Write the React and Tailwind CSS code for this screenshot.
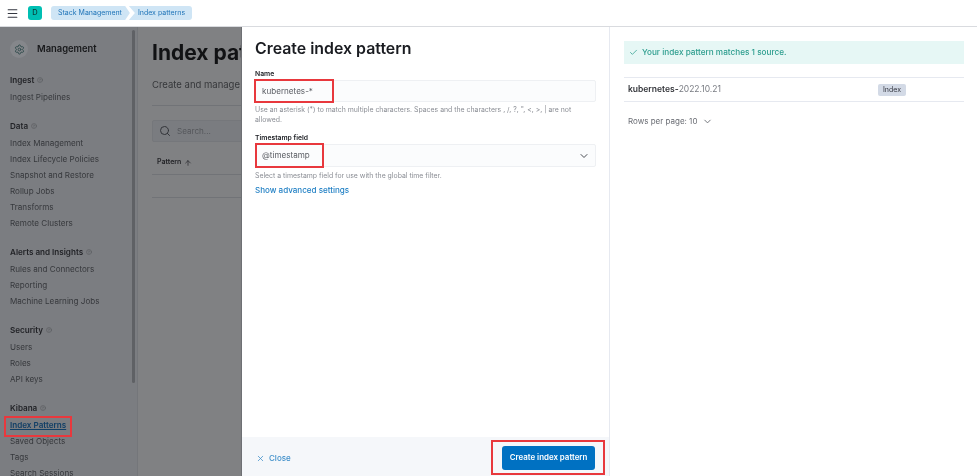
import React from 'react';
import { Menu, Check, ChevronDown, X, Search, ArrowUp, Settings, HelpCircle } from 'lucide-react';

const navGroups = [
  { title: 'Ingest', items: ['Ingest Pipelines'] },
  { title: 'Data', items: ['Index Management', 'Index Lifecycle Policies', 'Snapshot and Restore', 'Rollup Jobs', 'Transforms', 'Remote Clusters'] },
  { title: 'Alerts and Insights', items: ['Rules and Connectors', 'Reporting', 'Machine Learning Jobs'] },
  { title: 'Security', items: ['Users', 'Roles', 'API keys'] },
  { title: 'Kibana', items: ['Index Patterns', 'Saved Objects', 'Tags', 'Search Sessions'] },
];

function Sidebar() {
  return (
    <aside className="relative w-[138px] shrink-0 overflow-hidden bg-[#7b7d81] border-r border-[#74767a] pl-[10px] pt-[8px]">
      <div className="flex items-center gap-[9px] h-[28px]">
        <div className="w-[18px] h-[18px] rounded-full bg-[#85878b] flex items-center justify-center">
          <Settings size={11} className="text-[#2f4a4c]" />
        </div>
        <span className="text-[9.4px] font-semibold text-[#17181a]">Management</span>
      </div>
      <div className="mt-[9px] flex flex-col gap-[13px]">
        {navGroups.map((group) => (
          <div key={group.title}>
            <div className="h-[16px] flex items-center gap-[3px] text-[8.1px] font-semibold text-[#222327]">
              {group.title}
              <HelpCircle size={6} className="text-[#55575a]" />
            </div>
            <ul className="mt-[1px]">
              {group.items.map((item) => (
                <li
                  key={item}
                  className={item === 'Index Patterns'
                    ? 'h-[16px] leading-[16px] text-[8.1px] font-semibold underline text-[#123f66] whitespace-nowrap'
                    : 'h-[16px] leading-[16px] text-[8.1px] text-[#36383c] whitespace-nowrap'}
                >
                  {item}
                </li>
              ))}
            </ul>
          </div>
        ))}
      </div>
      {/* scrollbar */}
      <div className="absolute right-[2px] top-[3px] w-[3px] h-[353px] bg-[#5f6165] rounded-full" />
    </aside>
  );
}

function PageBehind() {
  return (
    <main className="flex-1 bg-[#808183] pl-[14px] pt-[12px] overflow-hidden">
      <h1 className="text-[21px] leading-[28px] font-bold text-[#111214] whitespace-nowrap">Index patterns</h1>
      <p className="mt-[11px] text-[9.5px] leading-[14px] text-[#35373a] whitespace-nowrap">Create and manage your index patterns</p>
      <div className="mt-[13px] h-px bg-[#717377]" />
      <div className="mt-[14px] h-[22px] rounded-[2px] bg-[#7a7c80] border border-[#75777b] flex items-center pl-[6px] gap-[6px]">
        <Search size={12} className="text-[#33353a]" />
        <span className="text-[8.1px] text-[#55575b]">Search...</span>
      </div>
      <div className="mt-[15px] pl-[5px] h-[18px] flex items-center gap-[3px] text-[7px] font-semibold text-[#222327] border-b border-[#717377] pb-[6px]">
        Pattern <ArrowUp size={8} />
      </div>
      <div className="h-[23px] border-b border-[#717377]" />
    </main>
  );
}

function FormPane() {
  return (
    <section className="w-[368px] shrink-0 flex flex-col border-r border-[#e6e9f0]">
      <div className="flex-1 px-[13px] pt-[11px]">
        <h2 className="text-[15.9px] leading-[22px] font-semibold text-[#1a1c21]">Create index pattern</h2>
        <label className="block mt-[9px] text-[6.8px] leading-[10px] font-semibold text-[#1a1c21]">Name</label>
        <div className="mt-[1px] h-[22px] bg-[#fbfcfd] border border-[#eef0f3] rounded-[2px] flex items-center pl-[6px] text-[8.1px] text-[#5a5d63]">kubernetes-*</div>
        <p className="mt-[3px] text-[6.9px] leading-[10px] text-[#8b8e95]">Use an asterisk (*) to match multiple characters. Spaces and the characters , /, ?, ", &lt;, &gt;, | are not allowed.</p>
        <label className="block mt-[8px] text-[6.8px] leading-[10px] font-semibold text-[#1a1c21]">Timestamp field</label>
        <div className="mt-[1px] h-[23px] bg-[#fbfcfd] border border-[#eef0f3] rounded-[2px] flex items-center justify-between pl-[6px] pr-[5px] text-[8.1px] text-[#5a5d63]">
          @timestamp
          <ChevronDown size={12} className="text-[#4a4d53]" />
        </div>
        <p className="mt-[4px] text-[6.9px] leading-[10px] text-[#8b8e95]">Select a timestamp field for use with the global time filter.</p>
        <a className="block mt-[3px] text-[8.05px] leading-[12px] font-medium text-[#1f7fc4]">Show advanced settings</a>
      </div>
      <footer className="h-[39px] bg-[#f5f7fa] flex items-center justify-between pl-[14px] pr-[14px] pt-[3px]">
        <button className="flex items-center gap-[4px] text-[8px] font-medium text-[#3f8fca]">
          <X size={9} /> Close
        </button>
        <button className="w-[93px] h-[24px] rounded-[3px] bg-[#0071c2] text-white text-[7.9px] font-semibold">Create index pattern</button>
      </footer>
    </section>
  );
}

function MatchPane() {
  return (
    <section className="flex-1 pt-[14px] pl-[14px] pr-[13px]">
      <div className="h-[23px] bg-[#e6f7f5] flex items-center pl-[5px] gap-[4px] text-[8.2px] font-medium text-[#2c9d8e]">
        <Check size={9} /> Your index pattern matches 1 source.
      </div>
      <div className="mt-[13px] h-[25px] border-y border-[#e6e9f0] flex items-center pl-[4px] text-[8.5px] text-[#787b82]">
        <span className="font-semibold text-[#33353a]">kubernetes-</span>2022.10.21
        <span className="ml-auto mr-[58px] w-[28px] h-[12px] rounded-[2px] bg-[#d3dae6] text-[7px] leading-[12px] text-center text-[#343741]">Index</span>
      </div>
      <div className="mt-[13px] pl-[4px] flex items-center gap-[5px] text-[8px] text-[#686b72]">
        Rows per page: 10 <ChevronDown size={11} />
      </div>
    </section>
  );
}

export default function App() {
  return (
    <div className="relative w-[977px] h-[476px] overflow-hidden bg-white font-['Inter',sans-serif] blur-[0.4px]">
      <header className="h-[27px] bg-white flex items-center border-b border-[#d9dbdf]">
        <Menu size={13} className="ml-[6px] text-[#343741]" />
        <div className="ml-[9px] w-[14px] h-[14px] rounded-[3px] bg-[#00bfb3] text-[7.5px] font-medium text-[#0c3d3a] flex items-center justify-center">D</div>
        <nav className="ml-[9px] flex items-center text-[7px] text-[#1f74b8]">
          <span className="h-[14px] leading-[14px] pl-[7px] pr-[8px] bg-[#cfe5f5] rounded-l-[3px] [clip-path:polygon(0_0,94%_0,100%_50%,94%_100%,0_100%)]">Stack Management</span>
          <span className="-ml-px h-[14px] leading-[14px] pl-[9px] pr-[7px] bg-[#cfe5f5] rounded-r-[3px] [clip-path:polygon(0_0,100%_0,100%_100%,0_100%,6px_50%)]">Index patterns</span>
        </nav>
      </header>

      <div className="flex h-[449px]">
        <Sidebar />
        <PageBehind />
      </div>

      {/* flyout */}
      <div className="absolute left-[241px] right-0 top-[27px] bottom-0 bg-white flex border-l border-[#6e7074]">
        <FormPane />
        <MatchPane />
      </div>

      {/* red annotation boxes */}
      <div className="absolute left-[254px] top-[79px] w-[80px] h-[24px] border-2 border-[#e8383d]" />
      <div className="absolute left-[255px] top-[143px] w-[69px] h-[25px] border-2 border-[#e8383d]" />
      <div className="absolute left-[4px] top-[416px] w-[68px] h-[21px] border-2 border-[#e8383d]" />
      <div className="absolute left-[491px] top-[440px] w-[114px] h-[35px] border-2 border-[#e8383d]" />
    </div>
  );
}
